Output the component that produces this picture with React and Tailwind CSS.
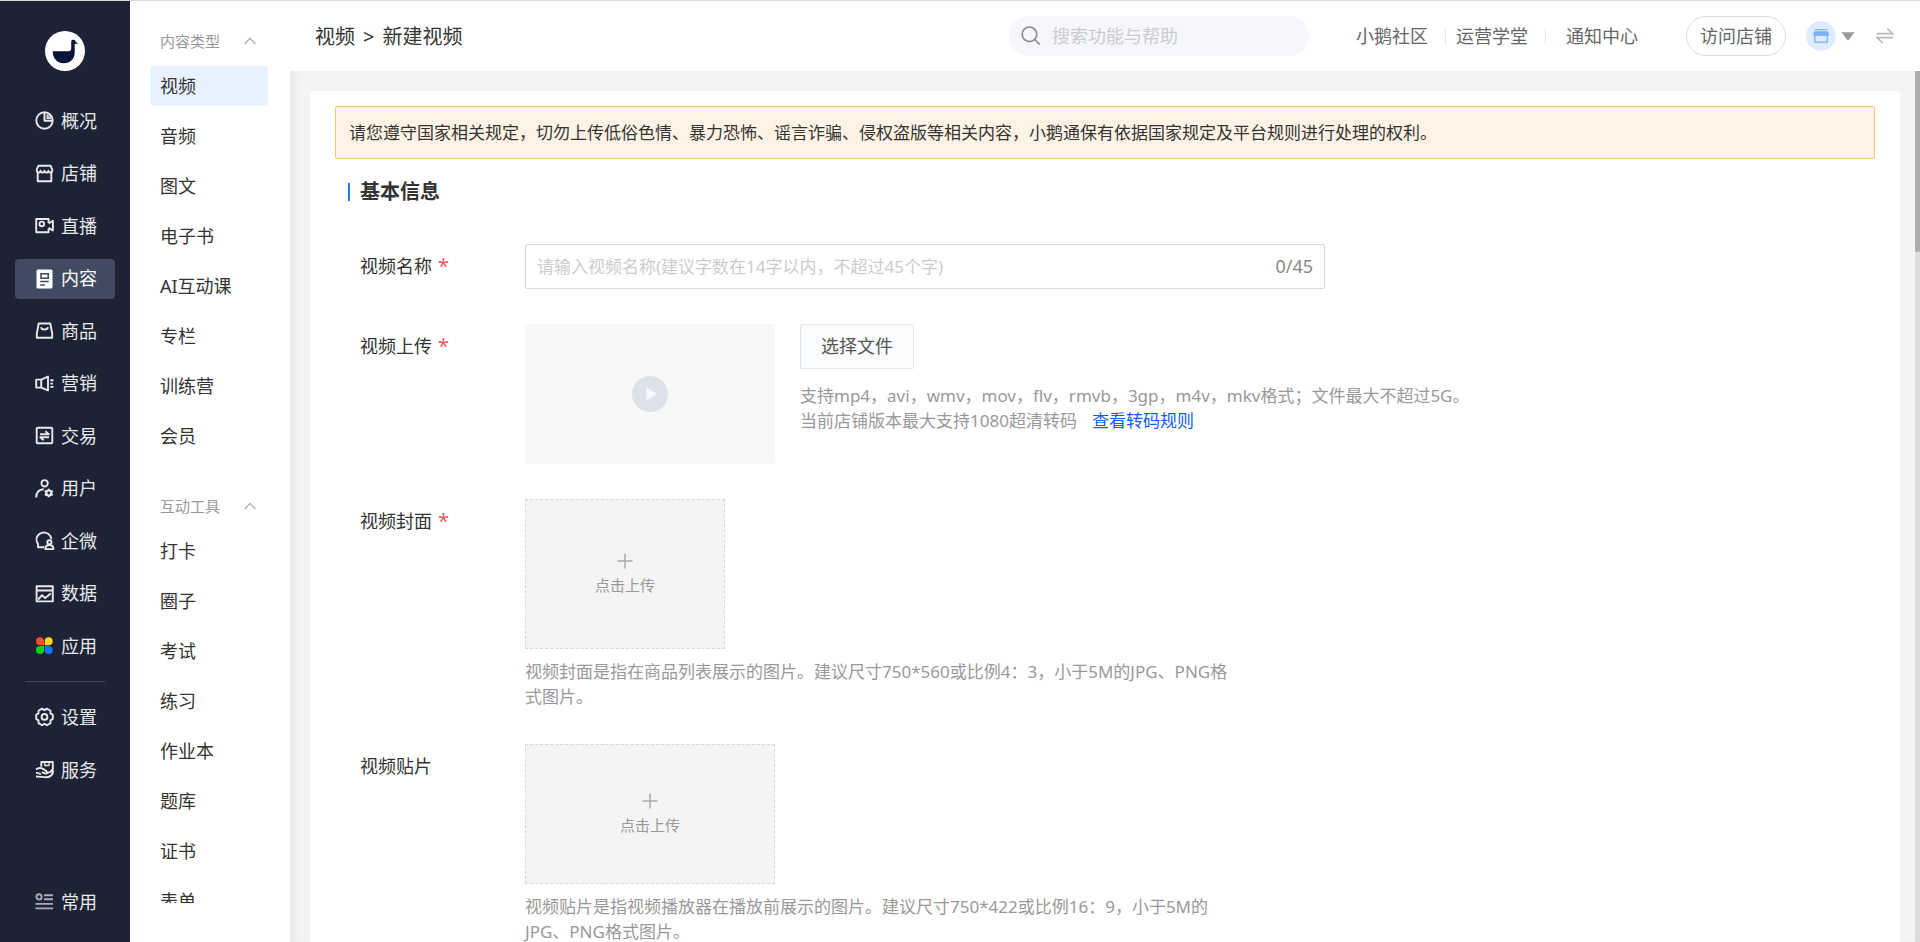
import React from "react";

const stroke = {
  fill: "none",
  stroke: "currentColor",
  strokeWidth: 1.9,
  strokeLinejoin: "round",
};

function Icon({ children, className = "size-5" }) {
  return (
    <svg viewBox="0 0 20 20" className={`${className} shrink-0`} aria-hidden="true" {...stroke}>
      {children}
    </svg>
  );
}

const icons = {
  overview: (
    <Icon>
      <circle cx="9.5" cy="9.5" r="8.2" />
      <path d="M9.5 1.5V9.8H17.8" />
      <path d="M12.2 3.6v3.8h4" strokeWidth="1.3" />
      <path d="M12.5 2.5a7 7 0 0 1 4.6 4.7h-4.6z" fill="currentColor" stroke="none" opacity=".7" />
    </Icon>
  ),
  shop: (
    <Icon>
      <path d="M3.4 1.8h12.2l1.6 3.6v1.4c0 2.3-3.7 2.3-3.8 0-.2 2.3-3.8 2.3-3.9 0-.1 2.3-3.7 2.3-3.9 0-.1 2.3-3.8 2.3-3.8 0V5.4z" />
      <path d="M2.7 8.5V17.2H16.3V8.5" />
    </Icon>
  ),
  live: (
    <Icon>
      <path d="M13.6 7V3H1.2V16.3H13.6V12.4" />
      <path d="M13.6 7.5 17.9 4.8V14.5L13.6 11.9" />
      <circle cx="6.8" cy="7.9" r="2.3" />
    </Icon>
  ),
  content: (
    <svg viewBox="0 0 20 20" className="size-5 shrink-0" aria-hidden="true">
      <rect x="1.5" y=".5" width="16" height="19" rx="1.5" fill="currentColor" />
      <path d="M6 4.7h7.2v4.6H6z" fill="none" stroke="#424a61" strokeWidth="1.6" />
      <path d="M5.2 12.6h8.6M5.2 15.9h4.6" stroke="#424a61" strokeWidth="1.5" />
    </svg>
  ),
  goods: (
    <Icon>
      <path d="M3.7 2.5H15.3L17.2 12.5V16.8H1.800V12.5z" />
      <path d="M6 6.2c.7 3 6.3 3 7 0" />
    </Icon>
  ),
  marketing: (
    <Icon>
      <path d="M1.2 5.6H6.2L13 2.6V16.4L6.2 13.6H1.2z" />
      <path d="M6.2 5.6v8M15.3 6.3h3.2M15.3 9.6h2.6M15.3 12.9h3.2" />
    </Icon>
  ),
  trade: (
    <Icon>
      <rect x="1.7" y="1.7" width="15.6" height="15.6" rx="1" />
      <path d="M5 8.2H13.8L10.4 5.2M14 11.3H5.3L8.6 14.2" />
    </Icon>
  ),
  user: (
    <Icon>
      <circle cx="9.6" cy="4.3" r="3.2" />
      <path d="M1.2 18.5C1.2 13.5 3.8 10.6 8.8 10.3" />
      <circle cx="13.8" cy="14" r="2.5" strokeWidth="2.2" />
      <path
        d="M13.8 9.7v1.6M13.8 16.7v1.6M9.8 11.9l1.5.8M16.3 15.3l1.5.8M9.8 16.1l1.5-.8M16.3 12.7l1.5-.8"
        strokeWidth="2"
      />
    </Icon>
  ),
  wecom: (
    <Icon>
      <path d="M9.2 16.3H3V12.8C.6 9.4 1.3 5.5 4.3 3.1 7.9.4 13 1.2 15.3 5 15.9 6 16.2 7.1 16.2 8.3" />
      <circle cx="14.4" cy="11.3" r="2.1" />
      <path d="M10.3 18.1c0-2.6 1.5-4.1 4.1-4.1s4 1.5 4 4.1z" />
    </Icon>
  ),
  data: (
    <Icon>
      <path d="M1.6 2.3H17.8V17.4H1.6zM1.6 6.5H17.8" />
      <path d="M3.200 15.500 7 11.200 10.200 14 15.800 9.600" />
    </Icon>
  ),
  apps: (
    <svg viewBox="0 0 20 20" className="size-5 shrink-0" aria-hidden="true">
      <path d="M5 1.3a4 4 0 0 1 4 4v4H5a4 4 0 0 1 0-8z" fill="#ff4d26" />
      <path d="M13.7 1.3a4 4 0 0 1 0 8h-4v-4a4 4 0 0 1 4-4z" fill="#ffd60f" />
      <path d="M5 10h4v4a4 4 0 1 1-4-4z" fill="#12d312" />
      <path d="M9.7 10h4a4 4 0 1 1-4 4z" fill="#1672ff" />
    </svg>
  ),
  settings: (
    <Icon>
      <path d="M11.9 1.6 15.5 3.7 15.5 6.4 17.8 7.8V12L15.500 13.4V16.100L11.9 18.200 9.5 16.700 7.1 18.200 3.5 16.100V13.400L1.200 12V7.800L3.500 6.400V3.700L7.100 1.600 9.500 3.100z" />
      <circle cx="9.5" cy="9.9" r="2.9" />
    </Icon>
  ),
  service: (
    <Icon>
      <path d="M6.3 6.8V2H17.8V9.2L15.3 12" />
      <path d="M9.8 2.2v3.3h4.3V2.2" strokeWidth="1.3" />
      <path d="M1 9.4C4.3 7.2 7 8 9 9.4L11.8 11.6C12.5 13 11 14.1 9.6 13.3L6.8 12" />
      <path d="M11.5 13.4C14 12.6 15.8 11.2 18 11 18.2 14 15.5 17.2 11.5 17.3 7.2 17.3 5.5 16.5 1 16.5M1 13C3 12.6 4.5 13.4 6 14.3" />
    </Icon>
  ),
  frequent: (
    <Icon>
      <circle cx="4" cy="4.9" r="2.6" />
      <path d="M9 3.3h9M9 7.2h9M.5 11.9h17.5M.5 16.4h17.5" />
    </Icon>
  ),
};

const mainNav = [
  ["概况", "overview"],
  ["店铺", "shop"],
  ["直播", "live"],
  ["内容", "content"],
  ["商品", "goods"],
  ["营销", "marketing"],
  ["交易", "trade"],
  ["用户", "user"],
  ["企微", "wecom"],
  ["数据", "data"],
  ["应用", "apps"],
];

const groups = [
  {
    title: "内容类型",
    items: ["视频", "音频", "图文", "电子书", "AI互动课", "专栏", "训练营", "会员"],
  },
  {
    title: "互动工具",
    items: ["打卡", "圈子", "考试", "练习", "作业本", "题库", "证书", "表单"],
  },
];

function NavItem({ label, icon, active, dim }) {
  return (
    <a
      href="#"
      aria-current={active ? "page" : undefined}
      className={`flex h-10 items-center gap-[6px] rounded-[4px] pl-5 text-[18px] ${
        active ? "bg-[#424a61] text-white" : "text-[#e8e9eb]"
      }`}
    >
      <span className={dim ? "opacity-70" : ""}>{icons[icon]}</span>
      {label}
    </a>
  );
}

function Sidebar() {
  return (
    <aside className="flex w-[130px] shrink-0 flex-col bg-[#1e2235] px-[15px] pb-5 pt-[30px]">
      <svg viewBox="0 0 40 40" className="size-10 shrink-0 self-center" role="img" aria-label="小鹅通">
        <circle cx="20" cy="20" r="20" fill="#fff" />
        <path
          d="M7.7 20.2h15.8c2-.1 2.7-1 2.7-3v-6.200c0-1.9 1.4-2.7 2.8-2.200.9.3 1.400 1 1.600 1.9l2.500 1.700-3.400.600v8.500c0 6.500-4.600 10.700-10.800 10.700-6.500 0-11.200-4.600-11.200-12z"
          fill="#07153a"
        />
      </svg>
      <nav className="mt-[30px] flex grow flex-col">
        <div className="flex h-[565px] flex-col justify-between">
          {mainNav.map(([label, icon]) => (
            <NavItem key={label} label={label} icon={icon} active={label === "内容"} />
          ))}
        </div>
        <hr className="mx-[10px] my-[15px] border-[#41465a]" />
        <div className="flex flex-col gap-[13px]">
          <NavItem label="设置" icon="settings" />
          <NavItem label="服务" icon="service" />
        </div>
        <div className="mt-auto">
          <NavItem label="常用" icon="frequent" dim />
        </div>
      </nav>
    </aside>
  );
}

function SubMenu() {
  return (
    <nav className="mb-[39px] flex w-[160px] shrink-0 flex-col gap-[25px] overflow-hidden bg-white pl-5 pr-[22px] pt-[15px]">
      {groups.map((group) => (
        <section key={group.title} className="shrink-0">
          <button
            type="button"
            aria-expanded="true"
            className="flex h-[50px] w-full items-center justify-between pl-[10px] pr-3 text-[15px] text-[#999]"
          >
            {group.title}
            <svg viewBox="0 0 12 8" className="h-2 w-3" fill="none" stroke="#b3b3b3" strokeWidth="1.5" aria-hidden="true">
              <path d="M.6 6.9 6 1.3l5.4 5.6" />
            </svg>
          </button>
          <ul className="flex flex-col gap-[10px]">
            {group.items.map((item) => (
              <li key={item}>
                <a
                  href="#"
                  className={`flex h-10 items-center whitespace-nowrap rounded-[4px] pl-[10px] text-[18px] text-[#333] ${
                    item === "视频" ? "bg-[#e8f2ff]" : ""
                  }`}
                >
                  {item}
                </a>
              </li>
            ))}
          </ul>
        </section>
      ))}
    </nav>
  );
}

function TopBar() {
  return (
    <header className="flex h-[70px] shrink-0 items-center bg-white pl-[25px] pr-[26px] text-[18px] text-[#666]">
      <div className="flex gap-2 pt-[2px] text-[20px] text-[#333]">
        <a href="#">视频</a>
        <span>&gt;</span>
        <span>新建视频</span>
      </div>
      <label className="ml-auto flex h-10 w-[300px] items-center gap-[11px] rounded-full bg-[#f5f7fb] pl-3 pr-4">
        <svg viewBox="0 0 20 20" className="size-5 shrink-0" fill="none" stroke="#8c8c8c" strokeWidth="1.7" aria-hidden="true">
          <circle cx="8.5" cy="8.3" r="7.3" />
          <path d="m13.7 13.5 5 5" />
        </svg>
        <input
          type="search"
          aria-label="搜索功能与帮助"
          placeholder="搜索功能与帮助"
          className="w-full bg-transparent outline-none placeholder:text-[#ccc]"
        />
      </label>
      <a href="#" className="ml-[47px]">小鹅社区</a>
      <span className="ml-[17px] h-[15px] w-px bg-[#e5e5e5]" />
      <a href="#" className="ml-[10px]">运营学堂</a>
      <span className="ml-[17px] h-[15px] w-px bg-[#e5e5e5]" />
      <a href="#" className="ml-5">通知中心</a>
      <button type="button" className="ml-12 h-10 w-[100px] rounded-full border border-[#dcdcdc]">
        访问店铺
      </button>
      <button type="button" aria-label="店铺菜单" className="ml-5 flex items-center gap-[5px]">
        <span className="flex size-[30px] items-center justify-center rounded-full bg-[#dfecff]">
          <svg viewBox="0 0 16 16" className="size-4" fill="#7aaeff" aria-hidden="true">
            <path d="M1.7 1h12.600v1.300H1.700zM1.300 3.200h13.400L16 6.600c0 2.100-2.500 2.200-3.200.700-.7 1.400-2.500 1.400-3.200 0-.700 1.400-2.500 1.400-3.200 0-.700 1.400-2.500 1.400-3.200 0C2.500 8.800 0 8.700 0 6.600z" />
            <path d="M1.8 8v6.200h12.400V8" fill="none" stroke="#7aaeff" strokeWidth="1.3" />
          </svg>
        </span>
        <svg viewBox="0 0 14 9" className="h-[9px] w-[14px]" fill="#999" aria-hidden="true">
          <path d="M.5.3h13L7 8.800z" />
        </svg>
      </button>
      <button type="button" aria-label="切换" className="ml-[21px]">
        <svg viewBox="0 0 18 16" className="h-4 w-[18px]" fill="none" stroke="#bbb" strokeWidth="1.7" aria-hidden="true">
          <path d="M.5 5.7h16.300L11.300.700M17.500 9.700H1.200l5.500 5.300" />
        </svg>
      </button>
    </header>
  );
}

function Row({ label, htmlFor, required, children }) {
  return (
    <div className="flex">
      <label htmlFor={htmlFor} className="w-[165px] shrink-0 pt-[10px] leading-[25px] text-[#333]">
        {label}
        {required && <span className="ml-[6px] text-[20px] leading-5 text-[#ec5b5b]">*</span>}
      </label>
      <div className="min-w-0 grow">{children}</div>
    </div>
  );
}

function Uploader({ id, size }) {
  return (
    <button
      id={id}
      type="button"
      className={`flex flex-col items-center justify-center gap-1 border border-dashed border-[#d9d9d9] bg-[#f4f4f4] text-[15px] leading-[25px] text-[#999] ${size}`}
    >
      <svg viewBox="0 0 16 16" className="mt-[3px] size-4" fill="none" stroke="#aaa" strokeWidth="1.5" aria-hidden="true">
        <path d="M8 .5v15M.5 8h15" />
      </svg>
      点击上传
    </button>
  );
}

function VideoForm() {
  return (
    <form className="pl-[25px] text-[18px]">
      <h2 className="flex items-center gap-[10px] pt-5 text-[20px] font-bold leading-[26px] text-[#333]">
        <span className="-ml-3 h-[18px] w-[2px] bg-[#2474f0]" />
        基本信息
      </h2>
      <div className="mt-[39px] flex flex-col gap-[35px]">
        <Row label="视频名称" htmlFor="video-name" required>
          <div className="flex h-[45px] max-w-[800px] items-center rounded-[2px] border border-[#d9d9d9] px-[11px]">
            <input
              id="video-name"
              maxLength={45}
              placeholder="请输入视频名称(建议字数在14字以内，不超过45个字)"
              className="min-w-0 grow text-[17px] outline-none placeholder:text-[#ccc]"
            />
            <span className="text-[#888]">0/45</span>
          </div>
        </Row>
        <Row label="视频上传" htmlFor="video-file" required>
          <div className="flex gap-[25px]">
            <div className="flex h-[140px] w-[250px] shrink-0 items-center justify-center rounded-[2px] bg-[#f7f8fa]">
              <svg viewBox="0 0 36 36" className="size-9" aria-hidden="true">
                <circle cx="18" cy="18" r="18" fill="#dee1e8" />
                <path d="M14.5 11.5v13L25 18z" fill="#f7f8fa" />
              </svg>
            </div>
            <div>
              <button
                id="video-file"
                type="button"
                className="h-[45px] rounded-[2px] border border-[#e3e6eb] bg-[#fafbfd] px-5 text-[#555]"
              >
                选择文件
              </button>
              <p className="mt-[14px] text-[17px] leading-[25px] text-[#999]">
                支持mp4，avi，wmv，mov，flv，rmvb，3gp，m4v，mkv格式；文件最大不超过5G。
                <br />
                当前店铺版本最大支持1080超清转码
                <a href="#" className="ml-[15px] text-[#105cfb]">查看转码规则</a>
              </p>
            </div>
          </div>
        </Row>
        <Row label="视频封面" htmlFor="video-cover" required>
          <Uploader id="video-cover" size="h-[150px] w-[200px]" />
          <p className="mt-[10px] max-w-[714px] text-[17px] leading-[25px] text-[#999]">
            视频封面是指在商品列表展示的图片。建议尺寸750*560或比例4：3，小于5M的JPG、PNG格式图片。
          </p>
        </Row>
        <Row label="视频贴片" htmlFor="video-sticker">
          <Uploader id="video-sticker" size="h-[140px] w-[250px]" />
          <p className="mt-[10px] max-w-[714px] text-[17px] leading-[25px] text-[#999]">
            视频贴片是指视频播放器在播放前展示的图片。建议尺寸750*422或比例16：9，小于5M的JPG、PNG格式图片。
          </p>
        </Row>
      </div>
    </form>
  );
}

export default function App() {
  return (
    <div className="flex h-screen flex-col overflow-hidden border-t border-[#d9d9d9] bg-white font-['Noto_Sans','Noto_Sans_CJK_SC',sans-serif]">
      <div className="flex min-h-0 grow">
        <Sidebar />
        <SubMenu />
        <div className="flex min-w-0 grow flex-col">
          <TopBar />
          <div className="flex min-h-0 grow bg-[#f4f4f4] shadow-[inset_8px_0_6px_-4px_#e6e6e6]">
            <main className="min-w-0 grow overflow-y-auto pl-5 pr-[15px] pt-5 [scrollbar-width:none]">
              <div className="rounded-[4px] bg-white px-[25px] pb-10 pt-[15px]">
                <p className="rounded-[2px] border border-[#ffc57a] bg-[#fff3e6] p-[13px] text-[17px] leading-[25px] text-[#333]">
                  请您遵守国家相关规定，切勿上传低俗色情、暴力恐怖、谣言诈骗、侵权盗版等相关内容，小鹅通保有依据国家规定及平台规则进行处理的权利。
                </p>
                <VideoForm />
              </div>
            </main>
            <div className="w-[5px] shrink-0 bg-[#dcdcdc]">
              <div className="h-[181px] rounded-b-[2px] bg-[#adadad]" />
            </div>
          </div>
        </div>
      </div>
    </div>
  );
}
